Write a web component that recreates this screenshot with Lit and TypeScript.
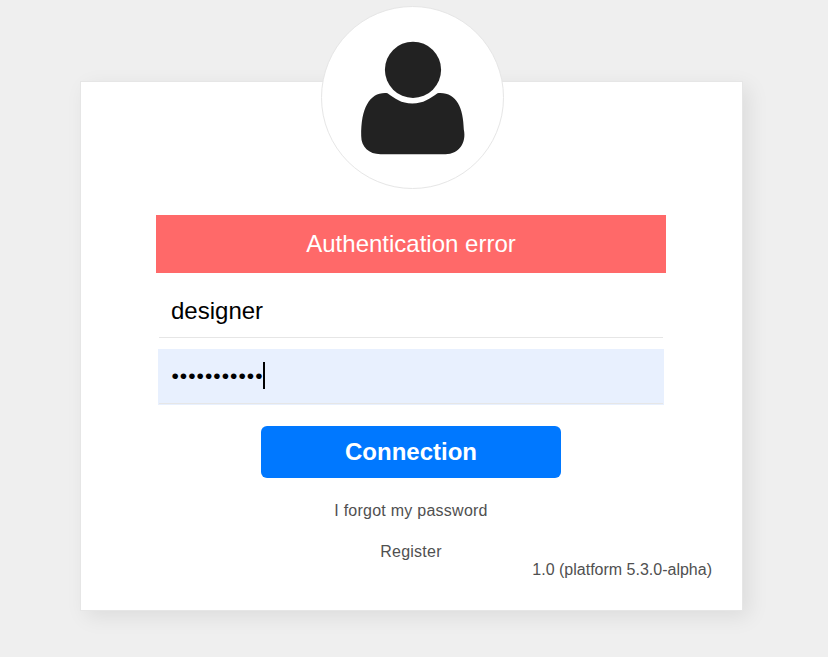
import { LitElement, html, css } from "lit";
import { customElement, property } from "lit/decorators.js";

@customElement("user-avatar")
class UserAvatar extends LitElement {
  static styles = css`
    :host {
      box-sizing: border-box;
      display: block;
      width: 183px;
      height: 183px;
      border: 1px solid #e6e6e6;
      border-radius: 50%;
      background: #fff;
    }
    .icon {
      display: block;
      width: 181px;
      height: 181px;
      fill: #222;
    }
  `;

  render() {
    return html`<svg class="icon" viewBox="322 7 181 181" aria-hidden="true">
      <circle cx="413" cy="69.8" r="28.1" />
      <path
        d="M387.5 93.2C395 98.6 401 103.4 412.3 103.4C423.6 103.4 430 98.6 437.5 93.2C456 91.5 463.4 107 463.8 129.5C466.8 143 458.5 154.2 445.5 154.2H380.5C369 154.2 361.2 147 361.2 136C360.8 107 370.5 91.5 387.5 93.2Z"
      />
    </svg>`;
  }
}

@customElement("login-field")
class LoginField extends LitElement {
  @property() value = "";
  @property({ type: Boolean, reflect: true }) focused = false;

  static styles = css`
    :host {
      box-sizing: border-box;
      display: block;
      width: 506px;
      height: 56px;
      padding: 0 1px 1px;
    }
    :host([focused]) {
      background: #e8f0fe;
    }
    .control {
      box-sizing: border-box;
      display: flex;
      align-items: center;
      height: 55px;
      padding: 0 12px;
      border-bottom: 1px solid #e6e6e6;
      color: #000;
      font-size: 24px;
      line-height: 27px;
    }
    :host([focused]) .control {
      padding-bottom: 2px;
    }
    :host([focused]) .value {
      padding-left: 0.5px;
      font-size: 21px;
      letter-spacing: 1.02px;
    }
    .caret {
      width: 2px;
      height: 27px;
      margin-left: -0.5px;
      background: #000;
    }
  `;

  render() {
    return html`<div class="control">
      <span class="value">${this.value}</span>${this.focused ? html`<span class="caret"></span>` : null}
    </div>`;
  }
}

@customElement("app-root")
class AppRoot extends LitElement {
  static styles = css`
    :host {
      box-sizing: border-box;
      display: block;
      height: 657px;
      padding: 81px 85px 0 80px;
      overflow: hidden;
      background: #efefef;
      color: #505050;
      font: 16px/18px "Liberation Sans", Arial, sans-serif;
    }
    .card {
      box-sizing: border-box;
      display: flex;
      flex-direction: column;
      align-items: center;
      width: 663px;
      height: 530px;
      border: 1px solid #e6e6e6;
      background: #fff;
      box-shadow: 6px 6px 20px rgba(0, 0, 0, 0.08);
    }
    .avatar {
      margin: -76px 0 26px 2px;
    }
    .form {
      display: flex;
      flex-direction: column;
      align-items: center;
      width: 510px;
      margin-right: 1px;
    }
    .alert {
      width: 510px;
      background: #ff6969;
      color: #fff;
      font-size: 24px;
      line-height: 58px;
      text-align: center;
    }
    .fields {
      display: flex;
      flex-direction: column;
      gap: 10px;
      margin: 10px 0 21px;
    }
    .submit {
      width: 300px;
      height: 52px;
      padding: 0;
      border: 0;
      border-radius: 6px;
      background: #0078ff;
      color: #fff;
      font: bold 24px/52px "Liberation Sans", Arial, sans-serif;
    }
    .links {
      display: flex;
      flex-direction: column;
      align-items: center;
      gap: 23px;
      margin-top: 24px;
      letter-spacing: 0.25px;
    }
    .version {
      align-self: flex-end;
      margin-right: 30px;
    }
  `;

  render() {
    return html`<main class="card">
      <user-avatar class="avatar"></user-avatar>
      <div class="form">
        <div class="alert" role="alert">Authentication error</div>
        <div class="fields">
          <login-field .value=${"designer"}></login-field>
          <login-field .value=${"•".repeat(11)} focused></login-field>
        </div>
        <button class="submit">Connection</button>
        <nav class="links">
          <span>I forgot my password</span>
          <span>Register</span>
        </nav>
      </div>
      <div class="version">1.0 (platform 5.3.0-alpha)</div>
    </main>`;
  }
}
